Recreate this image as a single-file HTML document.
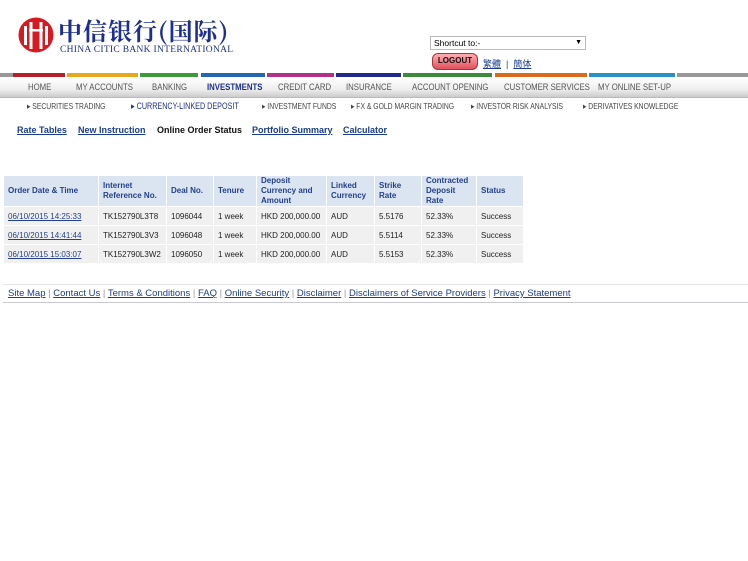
<!DOCTYPE html>
<html><head><meta charset="utf-8"><style>
body{margin:0;width:748px;height:561px;background:#fff;font-family:"Liberation Sans",Arial,sans-serif;position:relative;overflow:hidden}
.a{position:absolute}
.bar{position:absolute;top:73px;height:4px}
.nav{position:absolute;top:78px;left:0;width:748px;height:19px;background:linear-gradient(#fff,#eee 60%,#ccc);border-bottom:1px solid #bbb}
.nav span{position:absolute;top:4px;font-size:9.5px;color:#555;white-space:nowrap;transform:scaleX(0.82);transform-origin:left}
.sub span{position:absolute;top:101px;font-size:8.5px;color:#444;white-space:nowrap;transform:scaleX(0.8);transform-origin:left}
.lk{position:absolute;top:125px;font-size:9px;color:#1a3d8f;text-decoration:underline;font-weight:bold;white-space:nowrap}
table{position:absolute;left:3px;top:175px;border-collapse:separate;border-spacing:1px;font-size:8px}
th{background:#dbe5f1;color:#24408e;text-align:left;font-weight:bold;padding:0 4px;height:30px;line-height:10px}
td{background:#f0f0f0;color:#222;padding:0 4px;height:18px;white-space:nowrap}
td a{color:#24408e}
.ft{position:absolute;top:288px;left:8px;font-size:9.5px;color:#999;white-space:nowrap}
.ft a{color:#1a3d8f;text-decoration:underline}
</style></head><body>
<svg class="a" style="left:17px;top:17px" width="38" height="36" viewBox="0 0 38 36"><circle cx="19" cy="18" r="17.5" fill="#d71920"/><g fill="#fff"><rect x="7" y="9" width="3" height="19"/><rect x="12.5" y="5" width="3" height="27"/><rect x="22.5" y="5" width="3" height="27"/><rect x="28" y="9" width="3" height="19"/><rect x="12" y="12" width="14" height="2.5"/></g></svg>
<div class="a" style="left:58px;top:12px;font-family:'Noto Serif CJK SC',serif;font-size:24px;color:#1c2f8f;font-weight:bold;letter-spacing:1px">中信银行(国际)</div>
<div class="a" style="left:60px;top:45px;font-family:'Liberation Serif',serif;font-size:9.5px;color:#1c2f8f;white-space:nowrap;letter-spacing:0.3px">CHINA CITIC BANK INTERNATIONAL</div>
<div class="a" style="left:430px;top:36px;width:151px;height:12px;border:1px solid #bbb;font-size:8.5px;line-height:12px;padding-left:3px">Shortcut to:-<span style="position:absolute;right:3px;top:0;font-size:7px">▼</span></div>
<div class="a" style="left:432px;top:53px;width:44px;height:15px;border-radius:6px;background:linear-gradient(#ffb0b5,#e0505a);border:1px solid #a33;font-size:8px;font-weight:bold;text-align:center;line-height:14px;color:#111">LOGOUT</div>
<div class="a" style="left:483px;top:57px;font-size:9px;color:#1a3d8f;font-family:'Liberation Sans','Noto Sans CJK TC',sans-serif"><u>繁體</u> &nbsp;|&nbsp; <u>簡体</u></div>
<div class="bar" style="left:0;width:13px;background:#999"></div>
<div class="bar" style="left:13px;width:52px;background:#b5202a"></div>
<div class="bar" style="left:67px;width:71px;background:#e8a81e"></div>
<div class="bar" style="left:140px;width:58px;background:#3d9a3a"></div>
<div class="bar" style="left:201px;width:64px;background:#2466b0"></div>
<div class="bar" style="left:267px;width:67px;background:#b0308a"></div>
<div class="bar" style="left:336px;width:65px;background:#1f2a8a"></div>
<div class="bar" style="left:403px;width:89px;background:#3d8a3d"></div>
<div class="bar" style="left:495px;width:92px;background:#dc6a1c"></div>
<div class="bar" style="left:589px;width:86px;background:#2a90c8"></div>
<div class="bar" style="left:677px;width:71px;background:#999"></div>
<div class="nav"><span style="left:28px">HOME</span><span style="left:76px">MY ACCOUNTS</span><span style="left:152px">BANKING</span><span style="left:207px;color:#1c2f8f;font-weight:bold">INVESTMENTS</span><span style="left:278px">CREDIT CARD</span><span style="left:346px">INSURANCE</span><span style="left:412px">ACCOUNT OPENING</span><span style="left:504px">CUSTOMER SERVICES</span><span style="left:598px">MY ONLINE SET-UP</span></div>
<div class="sub"><span style="left:27px">▸ SECURITIES TRADING</span><span style="left:131px;color:#1c2f8f;font-size:9px">▸ CURRENCY-LINKED DEPOSIT</span><span style="left:262px">▸ INVESTMENT FUNDS</span><span style="left:351px">▸ FX &amp; GOLD MARGIN TRADING</span><span style="left:471px">▸ INVESTOR RISK ANALYSIS</span><span style="left:583px">▸ DERIVATIVES KNOWLEDGE</span></div>
<span class="lk" style="left:17px">Rate Tables</span><span class="lk" style="left:78px">New Instruction</span><span class="lk" style="left:157px;color:#111;text-decoration:none">Online Order Status</span><span class="lk" style="left:252px">Portfolio Summary</span><span class="lk" style="left:343px">Calculator</span>
<table>
<tr><th style="width:86px">Order Date &amp; Time</th><th style="width:59px">Internet<br>Reference No.</th><th style="width:38px">Deal No.</th><th style="width:34px">Tenure</th><th style="width:61px">Deposit<br>Currency and<br>Amount</th><th style="width:39px">Linked<br>Currency</th><th style="width:38px">Strike<br>Rate</th><th style="width:46px">Contracted<br>Deposit<br>Rate</th><th style="width:38px">Status</th></tr>
<tr><td><a href="#">06/10/2015 14:25:33</a></td><td>TK152790L3T8</td><td>1096044</td><td>1 week</td><td>HKD 200,000.00</td><td>AUD</td><td>5.5176</td><td>52.33%</td><td>Success</td></tr>
<tr><td><a href="#">06/10/2015 14:41:44</a></td><td>TK152790L3V3</td><td>1096048</td><td>1 week</td><td>HKD 200,000.00</td><td>AUD</td><td>5.5114</td><td>52.33%</td><td>Success</td></tr>
<tr><td><a href="#">06/10/2015 15:03:07</a></td><td>TK152790L3W2</td><td>1096050</td><td>1 week</td><td>HKD 200,000.00</td><td>AUD</td><td>5.5153</td><td>52.33%</td><td>Success</td></tr>
</table>
<div class="a" style="left:3px;top:284px;width:745px;border-top:1px solid #e4e4e4"></div>
<div class="ft"><a>Site Map</a> | <a>Contact Us</a> | <a>Terms &amp; Conditions</a> | <a>FAQ</a> | <a>Online Security</a> | <a>Disclaimer</a> | <a>Disclaimers of Service Providers</a> | <a>Privacy Statement</a></div>
<div class="a" style="left:3px;top:302px;width:745px;border-top:1px solid #c8c8d8"></div>
</body></html>
